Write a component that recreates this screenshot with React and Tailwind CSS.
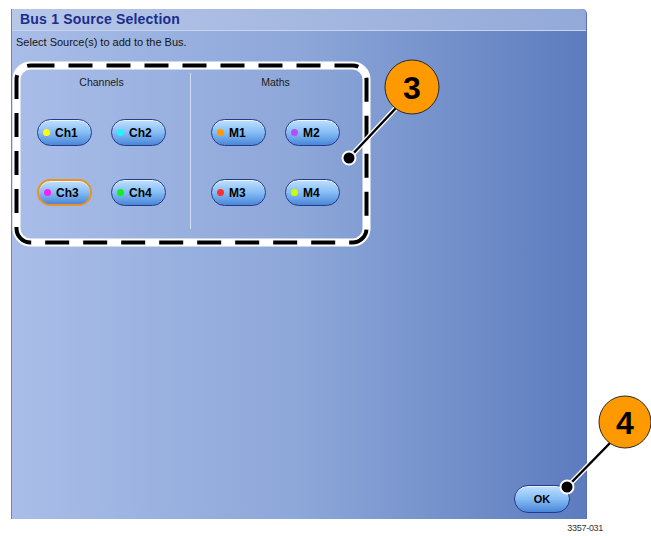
import React from 'react';

const CHANNELS = [
    { label: 'Ch1', dot: 'bg-[#ffff00]' },
    { label: 'Ch2', dot: 'bg-[#22f4ff]' },
    { label: 'Ch3', dot: 'bg-[#ff1cff]', selected: true },
    { label: 'Ch4', dot: 'bg-[#11ee22]' },
];

const MATHS = [
    { label: 'M1', dot: 'bg-[#ff9a00]' },
    { label: 'M2', dot: 'bg-[#b84cff]' },
    { label: 'M3', dot: 'bg-[#ff3030]' },
    { label: 'M4', dot: 'bg-[#ccff00]' },
];

function SourceButton({ label, dot, selected }) {
    return (
        <button
            className={`flex items-center h-[27px] w-[55px] rounded-full ${
                selected ? 'border-2 border-[#ec9220]' : 'border-[1.5px] border-[#263a8a]'
            } bg-gradient-to-b from-[#bfe0ff] via-[#86bdf5] to-[#4a86d8] pl-[5px] gap-[5px] text-[12px] font-bold text-black shadow-[inset_0_1px_0_rgba(255,255,255,0.7)]`}
        >
            <span className={`w-[7px] h-[7px] rounded-full ${dot}`} />
            <span>{label}</span>
        </button>
    );
}

function SourceGroup({ title, items }) {
    return (
        <div className="flex flex-col items-center w-[129px] pt-[3px]">
            <div className="text-[10.5px] text-[#1a1a1a] leading-[13px]">{title}</div>
            <div className="grid grid-cols-2 gap-x-[19px] gap-y-[33px] mt-[30px]">
                {items.map((item) => (
                    <SourceButton key={item.label} {...item} />
                ))}
            </div>
        </div>
    );
}

export default function App() {
    return (
        <div className="relative w-[651px] h-[536px] bg-white font-['Liberation_Sans',Arial,sans-serif] overflow-hidden">
            {/* Dialog */}
            <div className="ml-[11px] mt-[9px] w-[576px] h-[510px] flex flex-col rounded-tr-[5px] border-l border-[#6d82c4] border-r border-r-[#5570b4] bg-gradient-to-r from-[#a9bde8] via-[#8da7d9] to-[#5d7cbe]">
                {/* Title bar */}
                <div className="h-[22px] flex items-center pl-[8px] rounded-tr-[5px] border-b border-[#c7d4ef] bg-gradient-to-r from-[#b7c7ea] via-[#a5b8e0] to-[#93a9d8]">
                    <span className="text-[14px] font-bold text-[#1b2d8c] tracking-[0.2px]">Bus 1 Source Selection</span>
                </div>

                <div className="relative flex-1 flex flex-col">
                    <div className="pl-[4px] pt-[5px] text-[11px] leading-[13px] text-[#141414]">
                        Select Source(s) to add to the Bus.
                    </div>

                    {/* Group box */}
                    <div className="ml-[9px] mt-[17px] w-[343px] h-[170px] grid grid-cols-[170px_1fr]">
                        <div className="border-r border-[#d4def3] my-[7px] pl-[16px]">
                            <SourceGroup title="Channels" items={CHANNELS} />
                        </div>
                        <div className="my-[7px] pl-[20px]">
                            <SourceGroup title="Maths" items={MATHS} />
                        </div>
                    </div>

                    <div className="flex-1" />

                    <div className="flex justify-end pr-[16px] pb-[6px]">
                        <button className="h-[28px] w-[56px] rounded-full border-[1.5px] border-[#263a8a] bg-gradient-to-b from-[#bfe0ff] via-[#86bdf5] to-[#4a86d8] text-[11px] font-bold text-black shadow-[inset_0_1px_0_rgba(255,255,255,0.7)]">
                            OK
                        </button>
                    </div>
                </div>
            </div>

            <div className="w-[603px] text-right text-[9px] leading-[11px] text-[#333] mt-[4px] tracking-[-0.3px]">3357-031</div>

            {/* Annotation overlay */}
            <svg className="absolute left-0 top-0" width="651" height="536" viewBox="0 0 651 536">
                <rect x="16.5" y="65.5" width="350" height="177" rx="14" fill="none" stroke="#ffffff" strokeWidth="8" />
                <rect x="16.5" y="65.5" width="350" height="177" rx="14" fill="none" stroke="#000000" strokeWidth="4" strokeDasharray="24 14" />

                <line x1="349" y1="158" x2="396" y2="108" stroke="#ffffff" strokeWidth="5" />
                <line x1="349" y1="158" x2="396" y2="108" stroke="#000000" strokeWidth="2.5" />
                <circle cx="349" cy="158" r="6.5" fill="#000000" stroke="#ffffff" strokeWidth="2" />
                <circle cx="412" cy="87" r="27" fill="#ff9900" stroke="#2a2a2a" strokeWidth="1" />
                <text x="412" y="99" textAnchor="middle" fontFamily="Liberation Sans, Arial, sans-serif" fontWeight="bold" fontSize="32" fill="#000">3</text>

                <line x1="567" y1="487" x2="612" y2="441" stroke="#ffffff" strokeWidth="5" />
                <line x1="567" y1="487" x2="612" y2="441" stroke="#000000" strokeWidth="2.5" />
                <circle cx="567" cy="487" r="6.5" fill="#000000" stroke="#ffffff" strokeWidth="2" />
                <circle cx="625" cy="422" r="26" fill="#ff9900" stroke="#2a2a2a" strokeWidth="1" />
                <text x="625" y="434" textAnchor="middle" fontFamily="Liberation Sans, Arial, sans-serif" fontWeight="bold" fontSize="32" fill="#000">4</text>
            </svg>
        </div>
    );
}
